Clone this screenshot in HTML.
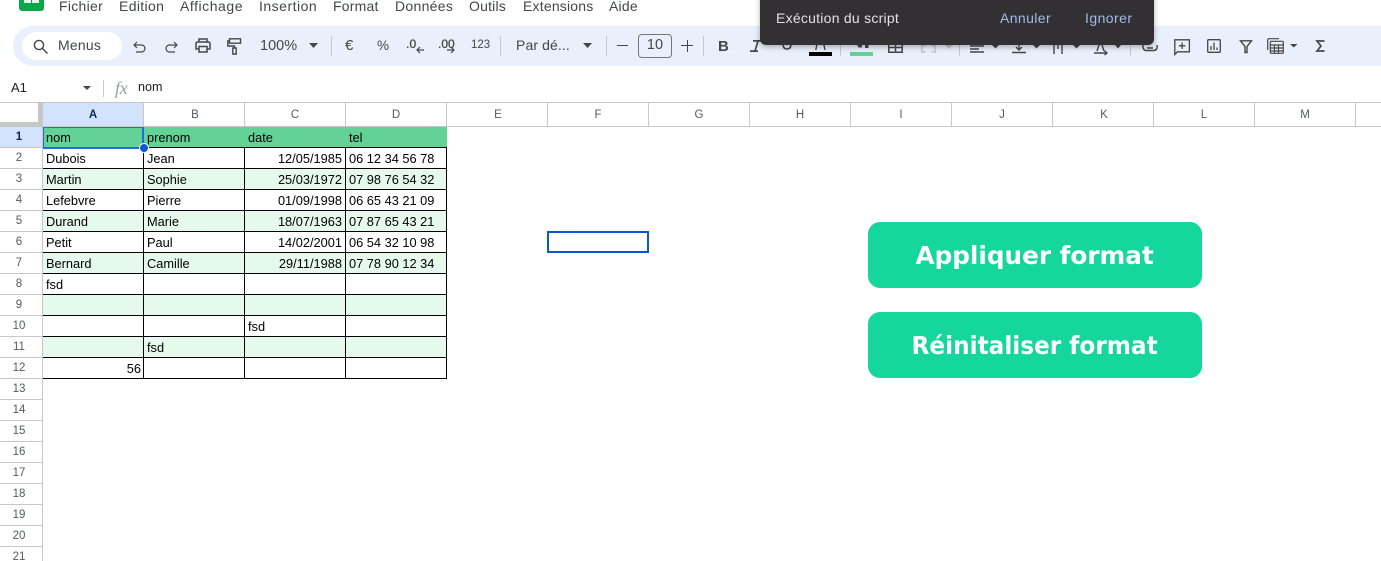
<!DOCTYPE html>
<html lang="fr"><head><meta charset="utf-8"><title>Sheets</title>
<style>
html,body{margin:0;padding:0;background:#fff;width:1381px;height:561px;overflow:hidden}
body{position:relative;font-family:"Liberation Sans",sans-serif}
.a{position:absolute;white-space:nowrap}
.m{top:-2px;font-size:14px;line-height:17px;color:#444746;letter-spacing:.2px}
.sep{position:absolute;top:36px;width:1px;height:20px;background:#c7c7c7}
.t{position:absolute;font-size:14px;line-height:20px;color:#444746}
.ch{position:absolute;top:104px;height:23px;line-height:23px;text-align:center;font-size:11.5px;color:#575a5a;width:100px}
.rh{position:absolute;left:0;width:38px;text-align:center;font-size:11.5px;line-height:20px;height:20px;color:#575a5a;margin-top:1px}
.c{position:absolute;font-size:12.8px;line-height:20px;height:20px;color:#000;white-space:nowrap;margin-top:1px}
.r{text-align:right;width:96px}
svg{position:absolute;overflow:visible}
.b{position:absolute;left:868px;width:334px;height:66px;border-radius:12px;background:#15d69c;color:#fff;font-family:"DejaVu Sans",sans-serif;font-weight:700;font-size:25px;line-height:67px;text-align:center}
.b span{display:inline-block}
</style></head><body>

<!-- logo -->
<div class="a" style="left:19px;top:-6px;width:25px;height:17px;background:#0ba84a;border-radius:3px"></div>
<div class="a" style="left:24px;top:0;width:15px;height:3px;background:#e6f4ea"></div>
<div class="a" style="left:31px;top:0;width:1px;height:3px;background:#0ba84a"></div>

<div class="a m" style="left:59px;letter-spacing:.3px">Fichier</div>
<div class="a m" style="left:119px;letter-spacing:.35px">Edition</div>
<div class="a m" style="left:180px;letter-spacing:.55px">Affichage</div>
<div class="a m" style="left:259px;letter-spacing:.5px">Insertion</div>
<div class="a m" style="left:333px">Format</div>
<div class="a m" style="left:395px;letter-spacing:.3px">Données</div>
<div class="a m" style="left:469px">Outils</div>
<div class="a m" style="left:523px">Extensions</div>
<div class="a m" style="left:609px">Aide</div>

<!-- toolbar -->
<div class="a" style="left:13px;top:26px;width:1368px;height:40px;background:#e9f0fb;border-radius:20px 0 0 20px"></div>
<div class="a" style="left:22px;top:32px;width:100px;height:28px;background:#fff;border-radius:14px"></div>
<svg style="left:33px;top:39px" width="15" height="15" viewBox="0 0 15 15" fill="none" stroke="#444746" stroke-width="1.4"><circle cx="6" cy="6" r="4.6"/><path d="M9.500 9.500l5 5"/></svg>
<div class="t" style="left:58px;top:35px;letter-spacing:.2px">Menus</div>

<svg style="left:133px;top:41px" width="13" height="12" viewBox="0 0 13 12" fill="none" stroke="#444746" stroke-width="1.2"><path d="M4 1L1 4l3 3M1 4h7.500a3.400 3.400 0 0 1 0 7H3"/></svg>
<svg style="left:165px;top:41px" width="13" height="12" viewBox="0 0 13 12" fill="none" stroke="#444746" stroke-width="1.2"><path d="M9 1l3 3-3 3M12 4H4.500a3.400 3.400 0 0 0 0 7H10"/></svg>
<svg style="left:195px;top:38px" width="16" height="15" viewBox="0 0 16 15" fill="none" stroke="#444746" stroke-width="1.5"><path d="M4 4V1h8v3M4 11H1V5.500A1.500 1.500 0 0 1 2.500 4h11A1.500 1.500 0 0 1 15 5.500V11h-3"/><path d="M4 8.500h8V14H4z"/></svg>
<svg style="left:227px;top:38px" width="15" height="17" viewBox="0 0 15 17" fill="none" stroke="#444746" stroke-width="1.4"><path d="M2.500 .8h11v4.400h-11zM2.500 3H.8v5h6.700v2"/><path d="M5.800 10h3.400v6H5.800z"/></svg>
<div class="t" style="left:260px;top:36px;font-size:14.500px">100%</div>
<svg style="left:309px;top:43px" width="9" height="5"><path d="M0 0h9L4.500 5z" fill="#444746"/></svg>
<div class="sep" style="left:331px"></div>
<div class="t" style="left:345px;top:36px;font-size:15px">€</div>
<div class="t" style="left:377px;top:36px;font-size:13.500px">%</div>
<div class="t" style="left:406px;top:34px;font-size:12px;letter-spacing:.2px;-webkit-text-stroke:.3px #444746">.0</div>
<svg style="left:416px;top:46px" width="9" height="8" fill="none" stroke="#444746" stroke-width="1.200"><path d="M8 4H1M4 1L1 4l3 3"/></svg>
<div class="t" style="left:438px;top:34px;font-size:12px;-webkit-text-stroke:.3px #444746">.00</div>
<svg style="left:447px;top:46px" width="9" height="8" fill="none" stroke="#444746" stroke-width="1.200"><path d="M0 4h7M4 1l3 3-3 3"/></svg>
<div class="t" style="left:471px;top:35px;font-size:11.500px">123</div>
<div class="sep" style="left:500px"></div>
<div class="t" style="left:516px;top:35px;letter-spacing:.1px">Par dé...</div>
<svg style="left:583px;top:43px" width="9" height="5"><path d="M0 0h9L4.500 5z" fill="#444746"/></svg>
<div class="sep" style="left:606px"></div>
<div class="a" style="left:617px;top:45px;width:11px;height:1px;background:#444746"></div>
<div class="a" style="left:638px;top:34px;width:32px;height:22px;border:1px solid #747775;border-radius:4px;text-align:center;font-size:14.500px;line-height:21px;color:#444746">10</div>
<div class="a" style="left:681px;top:45px;width:12px;height:1px;background:#444746"></div>
<div class="a" style="left:687px;top:40px;width:1px;height:12px;background:#444746"></div>
<div class="sep" style="left:703px"></div>
<div class="t" style="left:718px;top:37px;font-weight:700;font-size:15px">B</div>
<svg style="left:750px;top:40px" width="13" height="12" fill="none" stroke="#444746" stroke-width="1.700"><path d="M3 .9h9M8 1L5 11M0 11.100h8"/></svg>
<svg style="left:782px;top:44px" width="10" height="6" fill="none" stroke="#444746" stroke-width="1.500"><path d="M1 0c0 3 1 5 4 5s4-2 4-5"/></svg>
<svg style="left:815px;top:44px" width="11" height="6" fill="none" stroke="#444746" stroke-width="1.400"><path d="M2 0L.8 6M8.800 0L10 6"/></svg>
<div class="a" style="left:809px;top:52px;width:23px;height:4px;background:#000"></div>
<div class="sep" style="left:840px"></div>
<svg style="left:857px;top:45px" width="12" height="3"><path d="M0 0h5v2.500H1.500zM8 0h3.500v3H8z" fill="#444746"/></svg>
<div class="a" style="left:850px;top:52px;width:23px;height:4px;background:#63d297"></div>
<svg style="left:888px;top:45px" width="15" height="8" fill="none" stroke="#444746" stroke-width="1.500"><path d="M.8 0v7.200h13.400V0M7.500 0v7M.8 2.500h13.400"/></svg>
<svg style="left:921px;top:45px" width="15" height="8" fill="none" stroke="#c4c7c5" stroke-width="1.400"><path d="M.7 0v7h4M14.300 0v7h-4M.7 .7h4M10.300 .7h4"/></svg>
<svg style="left:945px;top:45px" width="8" height="4"><path d="M0 0h8L4 4z" fill="#c4c7c5"/></svg>
<div class="sep" style="left:959px"></div>
<svg style="left:970px;top:45px" width="29" height="9" fill="none" stroke="#444746" stroke-width="1.400"><path d="M0 1h14M0 4h9M0 7h14"/><path d="M22 0h7l-3.500 3.500z" fill="#444746" stroke="none"/></svg>
<svg style="left:1012px;top:45px" width="28" height="9" fill="none" stroke="#444746" stroke-width="1.400"><path d="M0 7.500h14M7 0v4.500M4 2L7 5l3-3"/><path d="M21 0h7l-3.500 3.500z" fill="#444746" stroke="none"/></svg>
<svg style="left:1053px;top:45px" width="27" height="10" fill="none" stroke="#444746" stroke-width="1.400"><path d="M1 0v9M9 0v9M5 0v4"/><path d="M20 0h7l-3.500 3.500z" fill="#444746" stroke="none"/></svg>
<svg style="left:1094px;top:45px" width="27" height="10" fill="none" stroke="#444746" stroke-width="1.400"><path d="M3 6l2-6M10 6L8 0M0 8h12M10.500 5.800l2.500 2.200-2.500 2"/><path d="M21 0h6l-3 3.500z" fill="#444746" stroke="none"/></svg>
<div class="sep" style="left:1130px"></div>
<svg style="left:1142px;top:45px" width="16" height="7" fill="none" stroke="#444746" stroke-width="1.500"><path d="M1 0c-.5 3 1 5.500 3 5.500h8c2.500 0 3.500-2.500 3-5.500M5 3h6"/></svg>
<svg style="left:1174px;top:38px" width="16" height="17" viewBox="0 0 16 17" fill="none" stroke="#444746" stroke-width="1.300"><path d="M.8 1.800h14.600v12H3.500L.8 16.500zM8.100 4.500v6.500M4.800 7.800h6.600"/></svg>
<svg style="left:1207px;top:39px" width="14" height="14" viewBox="0 0 14 14" fill="none" stroke="#444746" stroke-width="1.300"><rect x=".7" y=".7" width="12.600" height="12.600" rx="1"/><path d="M4 7v4M7 3.500V11M10 8.500V11"/></svg>
<svg style="left:1240px;top:40px" width="12" height="13" viewBox="0 0 12 13" fill="none" stroke="#444746" stroke-width="1.400"><path d="M.5 .8h11L7 6.500v6H5v-6z"/></svg>
<svg style="left:1267px;top:38px" width="31" height="16" viewBox="0 0 31 16" fill="none" stroke="#444746" stroke-width="1.200"><path d="M.7 12V2A1.300 1.300 0 0 1 2 .7h10"/><rect x="3.300" y="3.300" width="13" height="12" rx="1"/><path d="M3.300 7h13M3.300 10h13M3.300 13h13M7.500 7v8M11.500 7v8"/><path d="M23 6h7.500l-3.750 3.500z" fill="#444746" stroke="none"/></svg>
<svg style="left:1316px;top:40px" width="9" height="12" viewBox="0 0 9 12" fill="none" stroke="#444746" stroke-width="1.700"><path d="M8.500 1H1l4 5-4 5h7.500"/></svg>

<!-- script dialog -->
<div class="a" style="left:760px;top:-10px;width:394px;height:55px;background:#323033;border-radius:0 0 6px 6px;box-shadow:0 2px 6px rgba(0,0,0,.3)"></div>
<div class="a" style="left:776px;top:9px;font-size:14px;line-height:18px;color:#e3e1e4;letter-spacing:.25px">Exécution du script</div>
<div class="a" style="left:1000px;top:9px;font-size:14px;line-height:18px;color:#9fbcec;letter-spacing:.4px">Annuler</div>
<div class="a" style="left:1085px;top:9px;font-size:14px;line-height:18px;color:#9fbcec;letter-spacing:.45px">Ignorer</div>

<!-- formula bar -->
<div class="a" style="left:11px;top:79px;font-size:13px;line-height:18px;color:#202124">A1</div>
<svg style="left:83px;top:86px" width="8" height="4"><path d="M0 0h8L4 4z" fill="#444746"/></svg>
<div class="a" style="left:103px;top:80px;width:1px;height:17px;background:#c7c7c7"></div>
<div class="a" style="left:115px;top:79px;font-family:'Liberation Serif',serif;font-style:italic;font-size:18px;line-height:18px;color:#9aa0a6;letter-spacing:-.3px">fx</div>
<div class="a" style="left:138px;top:78px;font-size:12.600px;line-height:18px;color:#202124">nom</div>

<!-- grid chrome -->
<svg style="left:0;top:0" width="1381" height="561" shape-rendering="crispEdges">
<rect x="43" y="103" width="100" height="23" fill="#d3e3fd"/>
<rect x="0" y="127" width="42" height="20" fill="#d3e3fd"/>
<rect x="0" y="102" width="1381" height="1" fill="#c7c7c7"/>
<rect x="0" y="126" width="1381" height="1" fill="#c7c7c7"/>
<rect x="38" y="103" width="5" height="23" fill="#c7c7c7"/>
<rect x="0" y="122" width="43" height="5" fill="#c7c7c7"/>
<g fill="#c7c7c7">
<rect x="143" y="103" width="1" height="23"/><rect x="244" y="103" width="1" height="23"/><rect x="345" y="103" width="1" height="23"/><rect x="446" y="103" width="1" height="23"/><rect x="547" y="103" width="1" height="23"/><rect x="648" y="103" width="1" height="23"/><rect x="749" y="103" width="1" height="23"/><rect x="850" y="103" width="1" height="23"/><rect x="951" y="103" width="1" height="23"/><rect x="1052" y="103" width="1" height="23"/><rect x="1153" y="103" width="1" height="23"/><rect x="1254" y="103" width="1" height="23"/><rect x="1355" y="103" width="1" height="23"/>
<rect x="42" y="127" width="1" height="434"/>
<rect x="0" y="147" width="42" height="1"/><rect x="0" y="168" width="42" height="1"/><rect x="0" y="189" width="42" height="1"/><rect x="0" y="210" width="42" height="1"/><rect x="0" y="231" width="42" height="1"/><rect x="0" y="252" width="42" height="1"/><rect x="0" y="273" width="42" height="1"/><rect x="0" y="294" width="42" height="1"/><rect x="0" y="315" width="42" height="1"/><rect x="0" y="336" width="42" height="1"/><rect x="0" y="357" width="42" height="1"/><rect x="0" y="378" width="42" height="1"/><rect x="0" y="399" width="42" height="1"/><rect x="0" y="420" width="42" height="1"/><rect x="0" y="441" width="42" height="1"/><rect x="0" y="462" width="42" height="1"/><rect x="0" y="483" width="42" height="1"/><rect x="0" y="504" width="42" height="1"/><rect x="0" y="525" width="42" height="1"/><rect x="0" y="546" width="42" height="1"/>
</g>
<rect x="43" y="127" width="404" height="20" fill="#63d297"/>
<g fill="#e6f9ed">
<rect x="43" y="169" width="404" height="20"/><rect x="43" y="211" width="404" height="20"/><rect x="43" y="253" width="404" height="20"/><rect x="43" y="295" width="404" height="20"/><rect x="43" y="337" width="404" height="20"/>
</g>
<g fill="#000">
<rect x="43" y="147" width="404" height="1"/><rect x="43" y="168" width="404" height="1"/><rect x="43" y="189" width="404" height="1"/><rect x="43" y="210" width="404" height="1"/><rect x="43" y="231" width="404" height="1"/><rect x="43" y="252" width="404" height="1"/><rect x="43" y="273" width="404" height="1"/><rect x="43" y="294" width="404" height="1"/><rect x="43" y="315" width="404" height="1"/><rect x="43" y="336" width="404" height="1"/><rect x="43" y="357" width="404" height="1"/><rect x="43" y="378" width="404" height="1"/>
<rect x="143" y="148" width="1" height="231"/><rect x="244" y="148" width="1" height="231"/><rect x="345" y="148" width="1" height="231"/><rect x="446" y="148" width="1" height="231"/>
</g>
<g fill="#1a6fe3">
<rect x="43" y="127" width="101" height="1"/>
<rect x="43" y="127" width="1" height="21"/>
<rect x="142" y="127" width="2" height="21"/>
<rect x="43" y="147" width="101" height="2"/>
</g>
<rect x="548" y="232" width="100" height="20" fill="none" stroke="#0b57d0" stroke-width="2"/>
</svg>
<div class="a" style="left:139px;top:143px;width:8px;height:8px;border:1px solid #fff;border-radius:50%;background:#0b57d0"></div>

<div class="ch" style="left:43px;font-weight:700;color:#0b2a5c">A</div>
<div class="ch" style="left:145px">B</div><div class="ch" style="left:245px">C</div><div class="ch" style="left:346px">D</div><div class="ch" style="left:448px">E</div><div class="ch" style="left:548px">F</div><div class="ch" style="left:649px">G</div><div class="ch" style="left:750px">H</div><div class="ch" style="left:851px">I</div><div class="ch" style="left:952px">J</div><div class="ch" style="left:1054px">K</div><div class="ch" style="left:1154px">L</div><div class="ch" style="left:1255px">M</div>

<div class="rh" style="top:126px;font-weight:700;color:#0b2a5c">1</div>
<div class="rh" style="top:147px">2</div><div class="rh" style="top:168px">3</div><div class="rh" style="top:189px">4</div><div class="rh" style="top:210px">5</div><div class="rh" style="top:231px">6</div><div class="rh" style="top:252px">7</div><div class="rh" style="top:273px">8</div><div class="rh" style="top:294px">9</div><div class="rh" style="top:315px">10</div><div class="rh" style="top:336px">11</div><div class="rh" style="top:357px">12</div><div class="rh" style="top:378px">13</div><div class="rh" style="top:399px">14</div><div class="rh" style="top:420px">15</div><div class="rh" style="top:441px">16</div><div class="rh" style="top:462px">17</div><div class="rh" style="top:483px">18</div><div class="rh" style="top:504px">19</div><div class="rh" style="top:525px">20</div><div class="rh" style="top:546px">21</div>

<!-- cells -->
<div class="c" style="left:46px;top:127px">nom</div><div class="c" style="left:147px;top:127px">prenom</div><div class="c" style="left:248px;top:127px">date</div><div class="c" style="left:349px;top:127px">tel</div>
<div class="c" style="left:46px;top:148px">Dubois</div><div class="c" style="left:147px;top:148px">Jean</div><div class="c r" style="left:246px;top:148px">12/05/1985</div><div class="c" style="left:349px;top:148px">06 12 34 56 78</div>
<div class="c" style="left:46px;top:169px">Martin</div><div class="c" style="left:147px;top:169px">Sophie</div><div class="c r" style="left:246px;top:169px">25/03/1972</div><div class="c" style="left:349px;top:169px">07 98 76 54 32</div>
<div class="c" style="left:46px;top:190px">Lefebvre</div><div class="c" style="left:147px;top:190px">Pierre</div><div class="c r" style="left:246px;top:190px">01/09/1998</div><div class="c" style="left:349px;top:190px">06 65 43 21 09</div>
<div class="c" style="left:46px;top:211px">Durand</div><div class="c" style="left:147px;top:211px">Marie</div><div class="c r" style="left:246px;top:211px">18/07/1963</div><div class="c" style="left:349px;top:211px">07 87 65 43 21</div>
<div class="c" style="left:46px;top:232px">Petit</div><div class="c" style="left:147px;top:232px">Paul</div><div class="c r" style="left:246px;top:232px">14/02/2001</div><div class="c" style="left:349px;top:232px">06 54 32 10 98</div>
<div class="c" style="left:46px;top:253px">Bernard</div><div class="c" style="left:147px;top:253px">Camille</div><div class="c r" style="left:246px;top:253px">29/11/1988</div><div class="c" style="left:349px;top:253px">07 78 90 12 34</div>
<div class="c" style="left:46px;top:274px">fsd</div>
<div class="c" style="left:248px;top:316px">fsd</div>
<div class="c" style="left:147px;top:337px">fsd</div>
<div class="c r" style="left:45px;top:358px">56</div>

<!-- buttons -->
<div class="b" style="top:222px"><span style="transform:scaleX(.988)">Appliquer format</span></div>
<div class="b" style="top:312px"><span style="transform:scaleX(.928)">Réinitaliser format</span></div>
</body></html>
